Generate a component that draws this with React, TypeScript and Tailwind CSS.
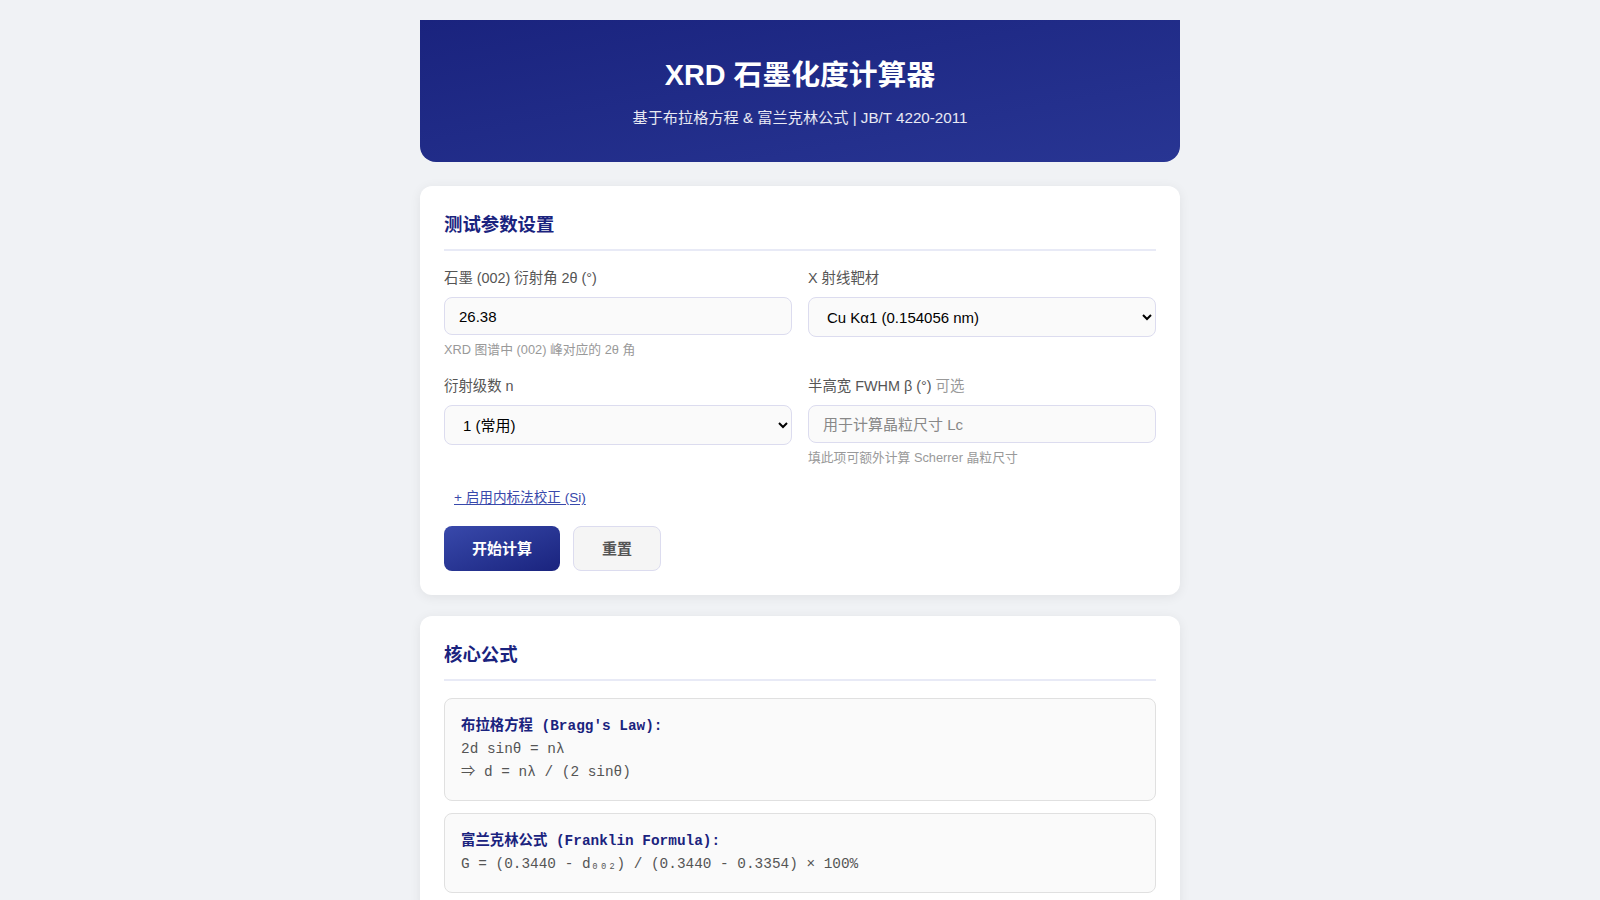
import { useState } from "react";

const sans = "font-['Liberation_Sans','Noto_Sans_CJK_SC',sans-serif]";
const mono = "font-['Liberation_Mono','Noto_Sans_CJK_SC',monospace]";

function Field({
  label,
  extra,
  hint,
  children,
}: {
  label: string;
  extra?: string;
  hint?: string;
  children: React.ReactNode;
}) {
  return (
    <div className="flex flex-col">
      <label className="mb-2 text-[14.4px] leading-[21px] text-[#555]">
        {label}
        {extra && <span className="text-[#999]"> {extra}</span>}
      </label>
      {children}
      {hint && <p className="mt-[6px] text-[12.8px] leading-[18px] text-[#999]">{hint}</p>}
    </div>
  );
}

const inputCls =
  "h-[38px] w-full rounded-lg border border-[#dcdcef] bg-[#fafafa] px-[14px] text-[15px] text-black outline-none placeholder:text-[#888]";
const selectCls =
  "h-[40px] w-full rounded-lg border border-[#dcdcef] bg-[#fafafa] px-[14px] text-[15px] text-black outline-none";

export default function App() {
  const [angle, setAngle] = useState("26.38");
  const [target, setTarget] = useState("cu");
  const [order, setOrder] = useState("1");
  const [fwhm, setFwhm] = useState("");

  return (
    <main className={`min-h-screen bg-[#f0f2f5] pb-10 pt-5 ${sans}`}>
      <div className="mx-auto w-[760px]">
        <header className="rounded-b-2xl bg-gradient-to-br from-[#1a237e] to-[#283593] px-5 pb-[33px] pt-[38px] text-center text-white">
          <h1 className="mb-[14px] text-[28.8px] font-bold leading-[35px]">XRD 石墨化度计算器</h1>
          <p className="text-[15.2px] leading-[22px] text-white/90">
            基于布拉格方程 &amp; 富兰克林公式 | JB/T 4220-2011
          </p>
        </header>

        <section className="mt-[24px] rounded-xl bg-white p-6 shadow-[0_2px_12px_rgba(0,0,0,0.07)]">
          <h2 className="mb-[17px] border-b-2 border-[#e8eaf6] pb-[11px] pt-[1px] text-[18.4px] font-bold leading-[27px] text-[#1a237e]">
            测试参数设置
          </h2>

          <div className="grid grid-cols-2 gap-x-4 gap-y-[17px]">
            <Field label="石墨 (002) 衍射角 2θ (°)" hint="XRD 图谱中 (002) 峰对应的 2θ 角">
              <input className={inputCls} value={angle} onChange={(e) => setAngle(e.target.value)} />
            </Field>
            <Field label="X 射线靶材">
              <select className={selectCls} value={target} onChange={(e) => setTarget(e.target.value)}>
                <option value="cu">Cu Kα1 (0.154056 nm)</option>
                <option value="co">Co Kα1 (0.178897 nm)</option>
                <option value="mo">Mo Kα1 (0.070932 nm)</option>
              </select>
            </Field>
            <Field label="衍射级数 n">
              <select className={selectCls} value={order} onChange={(e) => setOrder(e.target.value)}>
                <option value="1">1 (常用)</option>
                <option value="2">2</option>
              </select>
            </Field>
            <Field label="半高宽 FWHM β (°)" extra="可选" hint="填此项可额外计算 Scherrer 晶粒尺寸">
              <input
                className={inputCls}
                placeholder="用于计算晶粒尺寸 Lc"
                value={fwhm}
                onChange={(e) => setFwhm(e.target.value)}
              />
            </Field>
          </div>

          <button className="mt-[21px] px-[10px] text-[13.6px] leading-5 text-[#3949ab] underline underline-offset-2">
            + 启用内标法校正 (Si)
          </button>

          <div className="mt-[17px] flex gap-[13px]">
            <button className="rounded-lg bg-gradient-to-br from-[#3949ab] to-[#1a237e] px-7 py-3 text-[15px] font-bold leading-[21px] text-white">
              开始计算
            </button>
            <button className="rounded-lg border border-[#dcdcef] bg-[#f5f5f5] px-7 py-3 text-[15px] font-bold leading-[19px] text-[#555]">
              重置
            </button>
          </div>
        </section>

        <section className="mt-[21px] rounded-xl bg-white p-6 shadow-[0_2px_12px_rgba(0,0,0,0.07)]">
          <h2 className="mb-[17px] border-b-2 border-[#e8eaf6] pb-[11px] pt-[1px] text-[18.4px] font-bold leading-[27px] text-[#1a237e]">
            核心公式
          </h2>
          <div className={`rounded-lg border border-[#e0e0e0] bg-[#fafafa] p-4 text-[14.4px] leading-[23px] text-[#555] ${mono}`}>
            <div className="font-bold text-[#1a237e]">布拉格方程 (Bragg's Law):</div>
            <div>2d sinθ = nλ</div>
            <div>⇒ d = nλ / (2 sinθ)</div>
          </div>
          <div className={`mt-3 rounded-lg border border-[#e0e0e0] bg-[#fafafa] p-4 text-[14.4px] leading-[23px] text-[#555] ${mono}`}>
            <div className="font-bold text-[#1a237e]">富兰克林公式 (Franklin Formula):</div>
            <div>G = (0.3440 - d₀₀₂) / (0.3440 - 0.3354) × 100%</div>
          </div>
        </section>
      </div>
    </main>
  );
}
